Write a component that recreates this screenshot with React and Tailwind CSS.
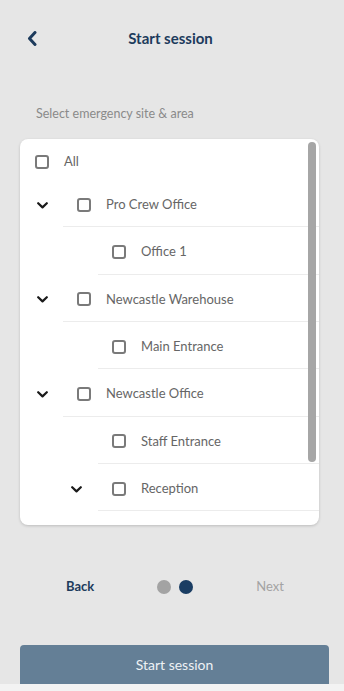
import React from "react";

const Check = () => (
  <span className="block w-[14px] h-[14px] shrink-0 rounded-[3px] border-2 border-[#7a7a7a] bg-white" />
);

const Chevron = () => (
  <svg width="11" height="7" viewBox="0 0 11 7" className="shrink-0">
    <path d="M1.2 1.2 L5.5 5.4 L9.8 1.2" fill="none" stroke="#1a1a1a" strokeWidth="2.2" strokeLinecap="round" strokeLinejoin="round" />
  </svg>
);

function SiteRow({ label }) {
  return (
    <div className="flex h-[47.33px]">
      <div className="w-[43px] shrink-0 flex items-center justify-center pl-[1px] pt-[3px]">
        <Chevron />
      </div>
      <div className="flex-1 flex items-center border-b border-[#ececec] pl-[14px] pt-[3px] gap-[15px]">
        <Check />
        <span className="text-[13px] text-[#666]">{label}</span>
      </div>
    </div>
  );
}

function AreaRow({ label, chevron }) {
  return (
    <div className="flex h-[47.33px]">
      <div className="w-[78px] shrink-0 flex items-center justify-end pr-[16px] pt-[3px]">
        {chevron ? <Chevron /> : null}
      </div>
      <div className="flex-1 flex items-center border-b border-[#ececec] pl-[14px] pt-[3px] gap-[15px]">
        <Check />
        <span className="text-[13px] text-[#666]">{label}</span>
      </div>
    </div>
  );
}

export default function App() {
  return (
    <div
      className="w-[344px] h-[691px] bg-[#e6e6e6] flex flex-col overflow-hidden"
      style={{ fontFamily: "Lato, 'Open Sans', sans-serif" }}
    >
      <div className="h-[78px] relative flex items-center justify-center pb-[2px]">
        <svg width="10" height="15" viewBox="0 0 10 15" className="absolute left-[27px] top-[31px]">
          <path d="M8 1.5 L2.5 7.5 L8 13.5" fill="none" stroke="#1d3b5c" strokeWidth="3" strokeLinecap="round" strokeLinejoin="round" />
        </svg>
        <span className="text-[15px] font-bold text-[#1d3b5c] ml-[-3px]">Start session</span>
      </div>
      <div className="h-[61px] pl-[36px] pt-[27px] text-[12.5px] text-[#8a8a8a]">
        Select emergency site &amp; area
      </div>
      <div className="ml-[20px] w-[299px] h-[386px] bg-white rounded-[8px] shadow-[0_1px_3px_rgba(0,0,0,0.18)] relative overflow-hidden">
        <div className="flex items-center h-[41px] pt-[5px] pl-[15px] gap-[15px]">
          <Check />
          <span className="text-[13px] text-[#666]">All</span>
        </div>
        <SiteRow label="Pro Crew Office" />
        <AreaRow label="Office 1" />
        <SiteRow label="Newcastle Warehouse" />
        <AreaRow label="Main Entrance" />
        <SiteRow label="Newcastle Office" />
        <AreaRow label="Staff Entrance" />
        <AreaRow label="Reception" chevron />
        <div className="absolute right-[3px] top-[3px] w-[8px] h-[320px] rounded-full bg-[#a6a6a6]" />
      </div>
      <div className="h-[120px] flex items-start pt-[52px]">
        <div className="w-full flex items-center">
          <span className="ml-[66px] text-[13px] font-bold text-[#1d3b5c]">Back</span>
          <div className="ml-[63px] flex items-center gap-[8px]">
            <span className="block w-[14px] h-[14px] rounded-full bg-[#a3a3a3]" />
            <span className="block w-[14px] h-[14px] rounded-full bg-[#1a3d63]" />
          </div>
          <span className="ml-[63px] text-[13px] text-[#a3a3a3]">Next</span>
        </div>
      </div>
      <div className="ml-[20px] w-[309px] h-[39px] bg-[#647f96] rounded-t-[4px] flex items-center justify-center text-[14px] text-[#eef2f5]">
        Start session
      </div>
      <div className="flex-1 bg-[#f3f3f3]" />
    </div>
  );
}
